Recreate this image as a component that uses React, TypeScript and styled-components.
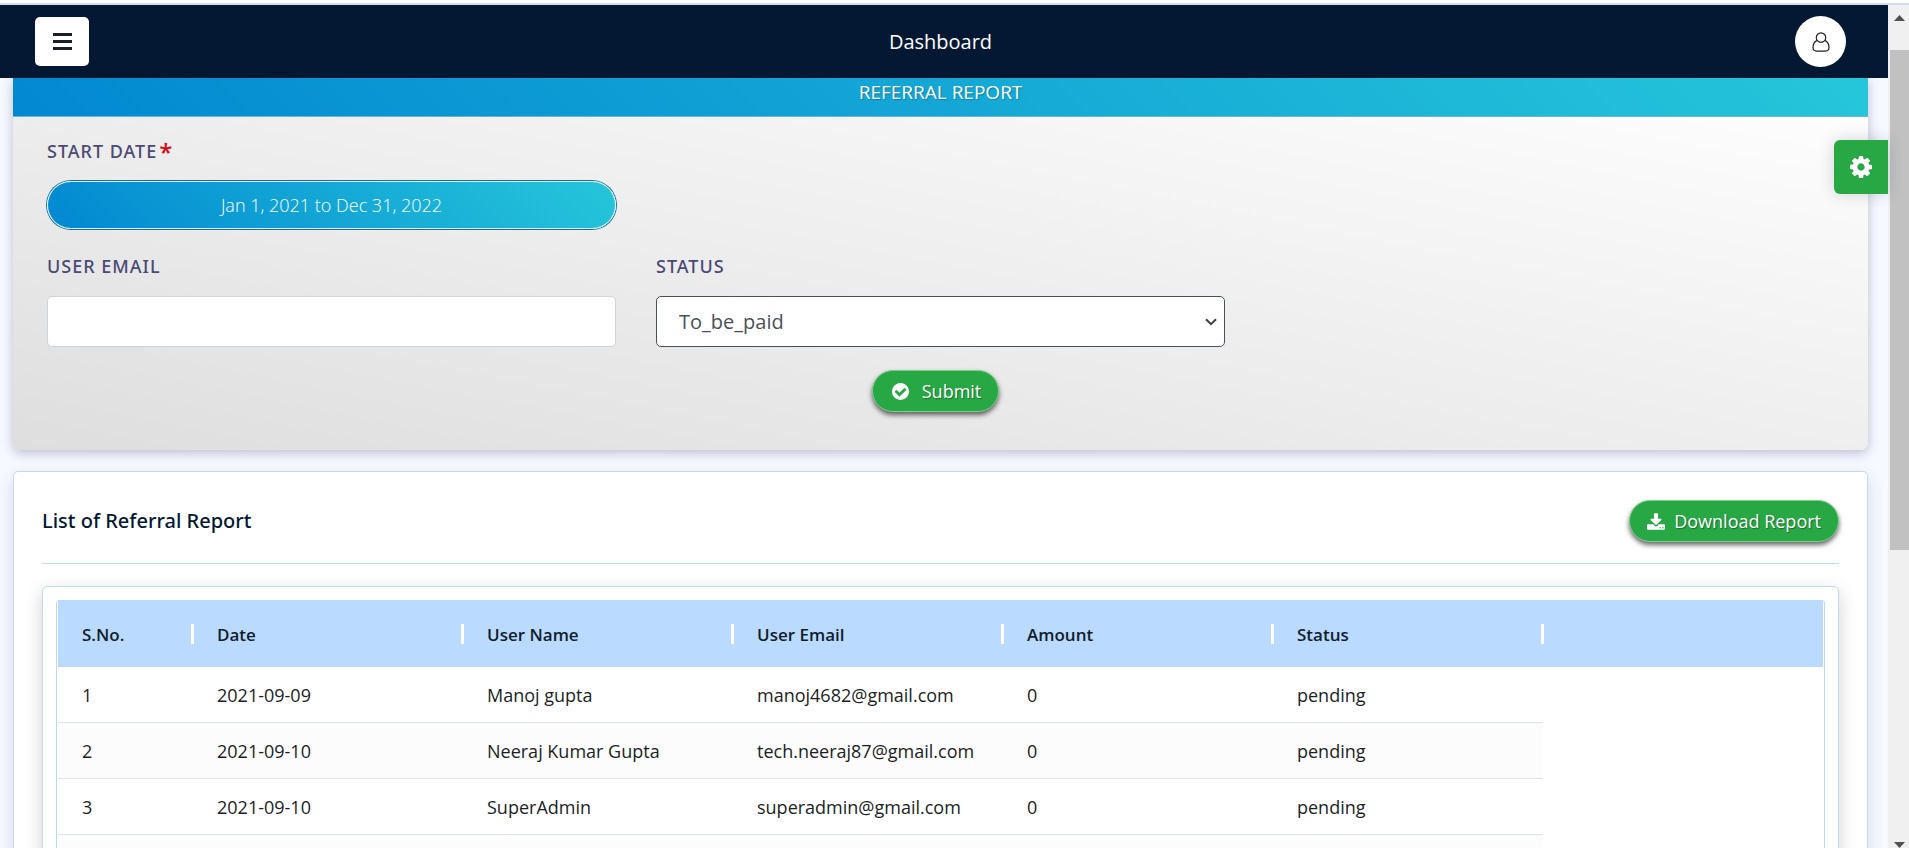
import React from "react";
import styled, { createGlobalStyle } from "styled-components";

const blueGradient = "linear-gradient(45deg, #0288d1, #26c6da)";
const mediumFamily = '"Noto Sans", "Open Sans", sans-serif';

const GlobalStyle = createGlobalStyle`
  *, *::before, *::after { box-sizing: border-box; }
  body {
    margin: 0;
    background: #f6f9ff;
    color: #1b1e24;
    font-family: "Open Sans", "Noto Sans", sans-serif;
    font-size: 18px;
  }
  button, input, select { font: inherit; }
`;

const Page = styled.div`
  display: flex;
  flex-direction: column;
  height: 100vh;
  overflow: hidden;
`;

const TopStrip = styled.div`
  flex: none;
  height: 5px;
  background: #fff;
  border-bottom: 2px solid #d3dcea;
`;

const Shell = styled.div`
  flex: 1;
  display: flex;
  min-height: 0;
`;

const Column = styled.div`
  position: relative;
  flex: 1;
  min-width: 0;
  display: flex;
  flex-direction: column;
`;

const AppBar = styled.header`
  flex: none;
  display: grid;
  grid-template-columns: 1fr auto 1fr;
  align-items: center;
  height: 73px;
  padding: 0 42px 0 35px;
  background: #041833;
  color: #fff;
`;

const AppTitle = styled.h1`
  margin: 0;
  font-size: 20px;
  font-weight: 400;
  line-height: 28px;
`;

const MenuButton = styled.button`
  display: grid;
  place-items: center;
  width: 54px;
  height: 49px;
  padding: 0;
  border: 0;
  border-radius: 5px;
  background: #fff;
  color: #1b1e24;
`;

const AvatarButton = styled.button`
  justify-self: end;
  display: grid;
  place-items: center;
  width: 51px;
  height: 51px;
  padding: 0;
  border: 0;
  border-radius: 50%;
  background: #fff;
  color: #1b1e24;
`;

const Content = styled.main`
  flex: 1;
  min-height: 0;
  overflow: hidden;
  padding: 0 20px 0 13px;
`;

const FilterCard = styled.section`
  margin-bottom: 21px;
  border-radius: 0 0 8px 8px;
  background: linear-gradient(to top right, #dedede, #fff);
  box-shadow: 0 3px 12px rgba(50, 50, 93, 0.3);
`;

const CardBand = styled.h2`
  margin: 0;
  height: 39px;
  border-bottom: 1px solid #6cb6d3;
  background: ${blueGradient};
  color: #fff;
  font-size: 19px;
  font-weight: 400;
  line-height: 28px;
  text-align: center;
  text-shadow: 1px 1px 1px rgba(0, 0, 0, 0.25);
`;

const FilterForm = styled.form`
  display: grid;
  grid-template-columns: repeat(3, 1fr);
  column-gap: 40px;
  row-gap: 23px;
  padding: 20px 34px 38px;
`;

const Field = styled.div`
  display: flex;
  flex-direction: column;
  gap: 16px;
`;

const DateField = styled(Field)`
  grid-column: 1;
`;

const EmailField = styled(Field)`
  grid-column: 1;
`;

const FieldLabel = styled.label`
  color: #4a4a73;
  font-family: ${mediumFamily};
  font-weight: 500;
  line-height: 28px;
  letter-spacing: 1px;
`;

const Required = styled.span`
  margin-left: 2px;
  color: #e3000f;
  font-size: 24px;
  line-height: 20px;
  vertical-align: -3px;
`;

const DateRangeButton = styled.button`
  height: 48px;
  border: 1px solid #e8f7fc;
  border-radius: 24px;
  background: ${blueGradient};
  box-shadow: 0 0 0 1px #0b73b0;
  color: #fff;
  font-weight: 300;
`;

const TextInput = styled.input`
  height: 51px;
  padding: 0 22px;
  border: 1px solid #ced4da;
  border-radius: 5px;
  background: #fff;
`;

const SelectWrap = styled.div`
  display: grid;
  align-items: center;
  & > * { grid-area: 1 / 1; }
  & > svg { justify-self: end; margin-right: 8px; pointer-events: none; }
`;

const Select = styled.select`
  appearance: none;
  width: 100%;
  height: 51px;
  padding: 0 22px;
  border: 1px solid #495057;
  border-radius: 5px;
  background: #fff;
  color: #495057;
  font-size: 20px;
`;

const FormActions = styled.div`
  grid-column: 1 / -1;
  display: flex;
  justify-content: center;
`;

const PillButton = styled.button<{ $gap: number }>`
  display: inline-flex;
  align-items: center;
  gap: ${(p) => p.$gap}px;
  height: 42px;
  padding: 0 17px;
  border: 1px solid #7fcb90;
  border-radius: 21px;
  background: #28a745;
  box-shadow: 0 3px 5px rgba(0, 0, 0, 0.6);
  color: #fff;
  text-shadow: 1px 1px 1px rgba(0, 0, 0, 0.35);
`;

const SubmitButton = styled(PillButton)`
  margin-right: 10px;
  padding: 0 17px 0 19px;
`;

const ReportCard = styled.section`
  padding: 28px 28px 40px;
  border: 1px solid #c3d9ee;
  border-radius: 5px;
  background: #fff;
  box-shadow: 0 6px 16px rgba(50, 70, 120, 0.18);
`;

const ReportHeader = styled.div`
  display: flex;
  align-items: center;
  justify-content: space-between;
  padding-bottom: 21px;
  margin-bottom: 22px;
  border-bottom: 1px solid #c3d9ee;
`;

const ReportTitle = styled.h2`
  margin: 0;
  color: #041833;
  font-family: ${mediumFamily};
  font-size: 20px;
  font-weight: 500;
  line-height: 28px;
`;

const TablePanel = styled.div`
  padding: 13px;
  border: 1px solid #c3d9ee;
  border-radius: 5px;
  box-shadow: 0 6px 18px rgba(0, 0, 0, 0.18);
`;

const TableFrame = styled.div`
  padding: 0 1px;
  border: 1px solid #bbd9f2;
  border-radius: 3px;
`;

const Table = styled.table`
  width: 100%;
  table-layout: fixed;
  border-collapse: separate;
  border-spacing: 0;
`;

const Col = styled.col<{ $width?: number }>`
  width: ${(p) => (p.$width ? `${p.$width}px` : "auto")};
`;

const HeadCell = styled.th`
  position: relative;
  height: 66px;
  padding: 0 24px;
  background: #bbdaff;
  color: #101d2c;
  font-size: 17px;
  font-weight: 600;
  text-align: left;

  &::after {
    content: "";
    position: absolute;
    top: 23px;
    right: -1px;
    z-index: 1;
    width: 3px;
    height: 20px;
    background: #fff;
  }
`;

const HeadFiller = styled.td`
  background: #bbdaff;
`;

const BodyRow = styled.tr<{ $odd: boolean }>`
  & > td:not(:last-child) {
    background: ${(p) => (p.$odd ? "#fcfcfd" : "#fff")};
    border-bottom: 1px solid #dfe2e6;
  }
`;

const Cell = styled.td`
  height: 56px;
  padding: 0 24px;
  white-space: nowrap;
`;

const SettingsButton = styled.button`
  position: absolute;
  top: 135px;
  right: 0;
  display: grid;
  place-items: center;
  width: 54px;
  height: 54px;
  padding: 0;
  border: 0;
  border-radius: 6px 0 0 6px;
  background: #28a745;
  box-shadow: 0 0 16px rgba(50, 50, 93, 0.2);
  color: #fff;
`;

const ScrollTrack = styled.div`
  flex: none;
  display: flex;
  flex-direction: column;
  align-items: center;
  width: 21px;
  padding: 10px 0 0 2px;
  background: #f0f0f0;
`;

const ScrollThumb = styled.div`
  flex: 0 0 60%;
  align-self: stretch;
  margin: 29px 0 auto;
  background: #c1c1c1;
`;

function BarsIcon() {
  return (
    <svg width="19" height="17" viewBox="0 0 19 17" fill="currentColor" aria-hidden="true">
      <rect width="19" height="3" />
      <rect y="7" width="19" height="3" />
      <rect y="14" width="19" height="3" />
    </svg>
  );
}

function UserIcon() {
  return (
    <svg width="18" height="20" viewBox="0 0 18 20" fill="none" stroke="currentColor" strokeWidth="1.2" aria-hidden="true">
      <circle cx="9" cy="5.6" r="4.7" />
      <path d="M5.2 8.4C2.6 9.6 1 12.4 1 15.6c0 2.2 1.4 3.5 3.6 3.5h8.8c2.2 0 3.6-1.3 3.6-3.5 0-3.2-1.600-6-4.200-7.200" />
    </svg>
  );
}

function CogIcon() {
  return (
    <svg width="22" height="22" viewBox="0 128 1536 1536" fill="currentColor" aria-hidden="true">
      <path d="M1024 896q0-106-75-181t-181-75-181 75-75 181 75 181 181 75 181-75 75-181zm512-109v222q0 12-8 23t-20 13l-185 28q-19 54-39 91 35 50 107 138 10 12 10 25t-9 23q-27 37-99 108t-94 71q-12 0-26-9l-138-108q-44 23-91 38-16 136-29 186-7 28-36 28h-222q-14 0-24.500-8.500t-11.500-21.500l-28-184q-49-16-90-37l-141 107q-10 9-25 9-14 0-25-11-126-114-165-168-7-10-7-23 0-12 8-23 15-21 51-66.500t54-70.500q-27-50-41-99l-183-27q-13-2-21-12.500t-8-23.500v-222q0-12 8-23t19-13l186-28q14-46 39-92-40-57-107-138-10-12-10-24 0-10 9-23 26-36 98.500-107.500t94.500-71.500q13 0 26 10l138 107q44-23 91-38 16-136 29-186 7-28 36-28h222q14 0 24.500 8.500t11.500 21.500l28 184q49 16 90 37l142-107q9-9 24-9 13 0 25 10 129 119 165 170 7 8 7 22 0 12-8 23-15 21-51 66.500t-54 70.500q26 50 41 98l183 28q13 2 21 12.500t8 23.500z" />
    </svg>
  );
}

function CheckCircleIcon() {
  return (
    <svg width="17" height="17" viewBox="128 128 1536 1536" fill="currentColor" aria-hidden="true">
      <path d="M1412 734q0-28-18-46l-91-90q-19-19-45-19t-45 19l-408 407-226-226q-19-19-45-19t-45 19l-91 90q-18 18-18 46 0 27 18 45l362 362q19 19 45 19 27 0 46-19l543-543q18-18 18-45zm252 162q0 209-103 385.500t-279.500 279.500-385.500 103-385.500-103-279.500-279.500-103-385.500 103-385.500 279.500-279.500 385.500-103 385.500 103 279.500 279.500 103 385.500z" />
    </svg>
  );
}

function DownloadIcon() {
  return (
    <svg width="18" height="17" viewBox="64 0 1664 1536" fill="currentColor" aria-hidden="true">
      <path d="M1344 1344q0-26-19-45t-45-19-45 19-19 45 19 45 45 19 45-19 19-45zm256 0q0-26-19-45t-45-19-45 19-19 45 19 45 45 19 45-19 19-45zm128-224v320q0 40-28 68t-68 28h-1472q-40 0-68-28t-28-68v-320q0-40 28-68t68-28h465l135 136q58 56 136 56t136-56l136-136h464q40 0 68 28t28 68zm-325-569q17 41-14 70l-448 448q-18 19-45 19t-45-19l-448-448q-31-29-14-70 17-39 59-39h256v-448q0-26 19-45t45-19h256q26 0 45 19t19 45v448h256q42 0 59 39z" />
    </svg>
  );
}

function ChevronIcon() {
  return (
    <svg width="12" height="8" viewBox="0 0 12 8" fill="none" stroke="#3a3f44" strokeWidth="2" aria-hidden="true">
      <path d="M1 1.200l5 5 5-5" />
    </svg>
  );
}

function ScrollArrow({ down }: { down?: boolean }) {
  return (
    <svg width="11" height="6" viewBox="0 0 11 6" fill="#505050" aria-hidden="true">
      <path d={down ? "M0 0h11L5.500 6z" : "M0 6h11L5.500 0z"} />
    </svg>
  );
}

const columns = ["S.No.", "Date", "User Name", "User Email", "Amount", "Status"];

const rows = [
  ["1", "2021-09-09", "Manoj gupta", "manoj4682@gmail.com", "0", "pending"],
  ["2", "2021-09-10", "Neeraj Kumar Gupta", "tech.neeraj87@gmail.com", "0", "pending"],
  ["3", "2021-09-10", "SuperAdmin", "superadmin@gmail.com", "0", "pending"],
  ["", "", "", "", "", ""],
];

export default function App() {
  return (
    <Page>
      <GlobalStyle />
      <TopStrip />
      <Shell>
        <Column>
          <AppBar>
            <MenuButton type="button" aria-label="Menu">
              <BarsIcon />
            </MenuButton>
            <AppTitle>Dashboard</AppTitle>
            <AvatarButton type="button" aria-label="Account">
              <UserIcon />
            </AvatarButton>
          </AppBar>
          <Content>
            <FilterCard>
              <CardBand>REFERRAL REPORT</CardBand>
              <FilterForm onSubmit={(e) => e.preventDefault()}>
                <DateField>
                  <FieldLabel htmlFor="range">
                    START DATE<Required>*</Required>
                  </FieldLabel>
                  <DateRangeButton id="range" type="button">
                    Jan 1, 2021 to Dec 31, 2022
                  </DateRangeButton>
                </DateField>
                <EmailField>
                  <FieldLabel htmlFor="email">USER EMAIL</FieldLabel>
                  <TextInput id="email" type="email" />
                </EmailField>
                <Field>
                  <FieldLabel htmlFor="status">STATUS</FieldLabel>
                  <SelectWrap>
                    <Select id="status" defaultValue="To_be_paid">
                      <option>To_be_paid</option>
                    </Select>
                    <ChevronIcon />
                  </SelectWrap>
                </Field>
                <FormActions>
                  <SubmitButton type="submit" $gap={13}>
                    <CheckCircleIcon />
                    Submit
                  </SubmitButton>
                </FormActions>
              </FilterForm>
            </FilterCard>
            <ReportCard>
              <ReportHeader>
                <ReportTitle>List of Referral Report</ReportTitle>
                <PillButton type="button" $gap={9}>
                  <DownloadIcon />
                  Download Report
                </PillButton>
              </ReportHeader>
              <TablePanel>
                <TableFrame>
                  <Table>
                    <colgroup>
                      {columns.map((name, i) => (
                        <Col key={name} $width={i === 0 ? 135 : 270} />
                      ))}
                      <Col />
                    </colgroup>
                    <thead>
                      <tr>
                        {columns.map((name) => (
                          <HeadCell key={name} scope="col">
                            {name}
                          </HeadCell>
                        ))}
                        <HeadFiller />
                      </tr>
                    </thead>
                    <tbody>
                      {rows.map((row, r) => (
                        <BodyRow key={r} $odd={r % 2 === 1}>
                          {row.map((value, c) => (
                            <Cell key={c}>{value}</Cell>
                          ))}
                          <td />
                        </BodyRow>
                      ))}
                    </tbody>
                  </Table>
                </TableFrame>
              </TablePanel>
            </ReportCard>
          </Content>
          <SettingsButton type="button" aria-label="Settings">
            <CogIcon />
          </SettingsButton>
        </Column>
        <ScrollTrack aria-hidden="true">
          <ScrollArrow />
          <ScrollThumb />
          <ScrollArrow down />
        </ScrollTrack>
      </Shell>
    </Page>
  );
}
